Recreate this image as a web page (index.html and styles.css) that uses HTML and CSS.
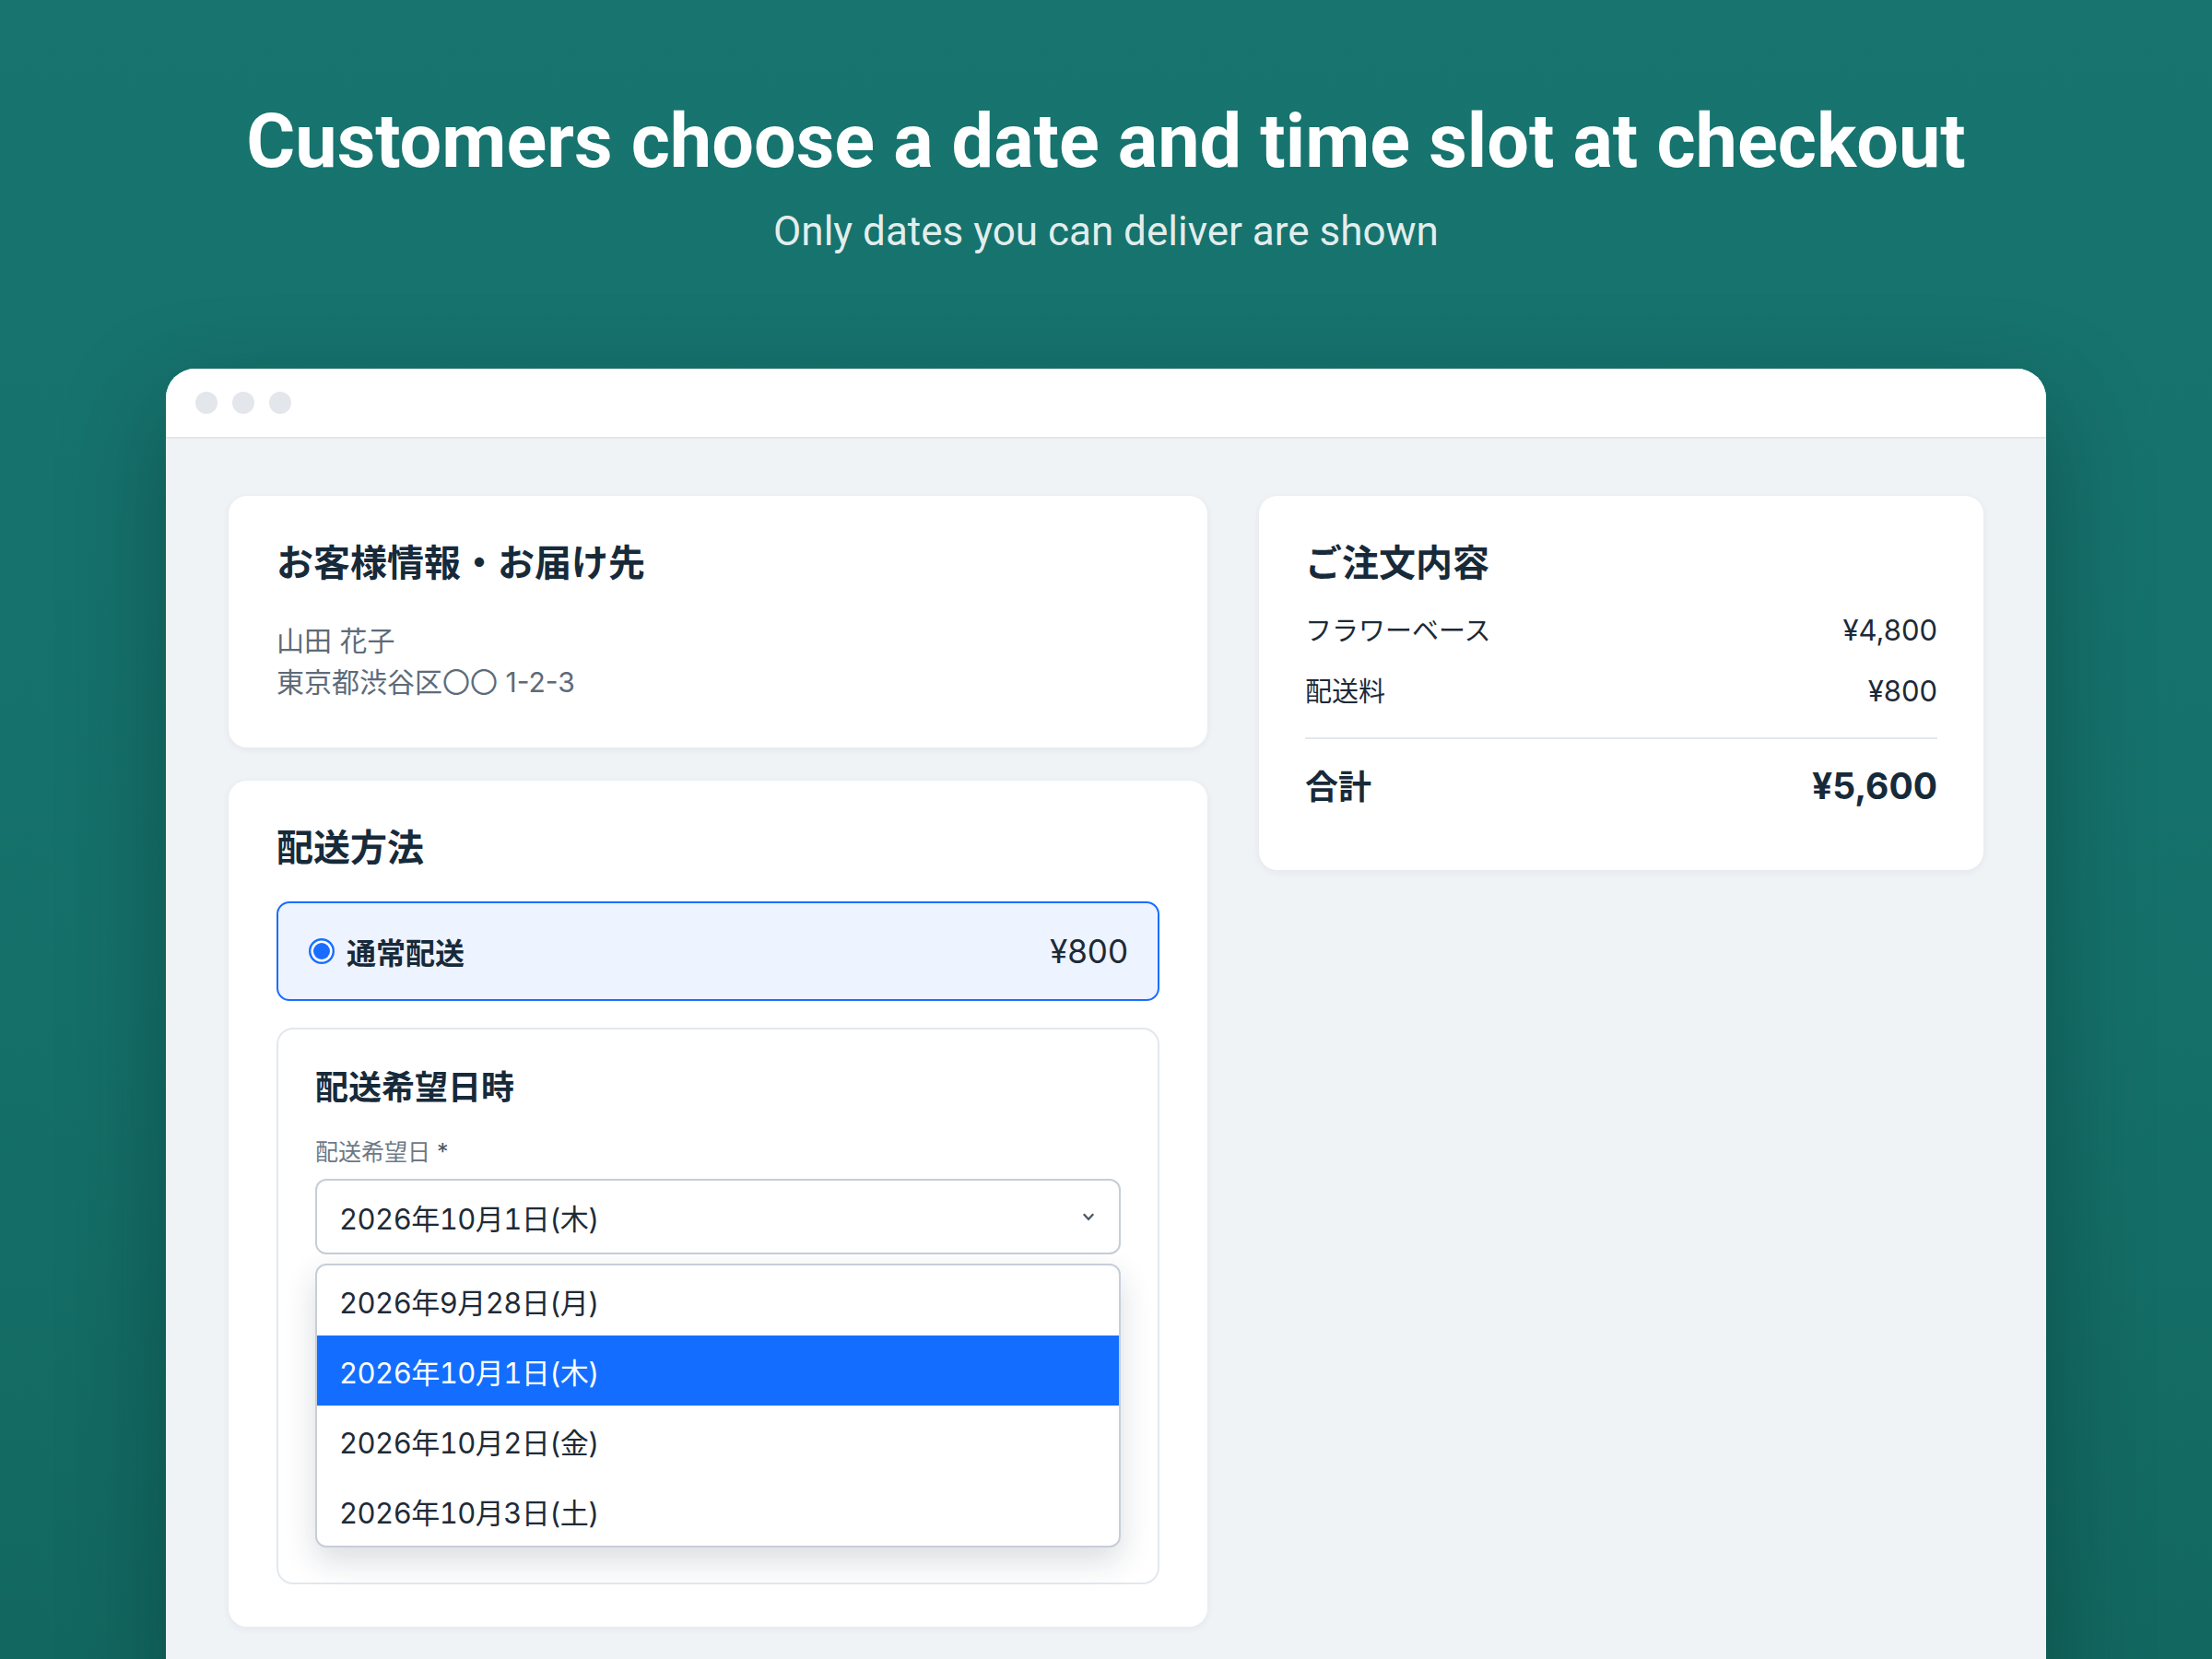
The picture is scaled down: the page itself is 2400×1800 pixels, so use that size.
FILE: index.html
```html
<!DOCTYPE html>
<html lang="ja">
<head>
<meta charset="utf-8">
<title>Checkout delivery date</title>
<link rel="stylesheet" href="styles.css">
</head>
<body>
<header class="hero">
  <h1 class="hero-title">Customers choose a date and time slot at checkout</h1>
  <p class="hero-sub">Only dates you can deliver are shown</p>
</header>
<div class="window">
  <div class="window-bar">
    <span class="dot"></span><span class="dot"></span><span class="dot"></span>
  </div>
  <div class="window-body">
    <div class="col-main">
      <section class="card card-customer">
        <h2 class="card-title">お客様情報・お届け先</h2>
        <p class="info-line">山田 花子</p>
        <p class="info-line">東京都渋谷区〇〇 1-2-3</p>
      </section>
      <section class="card card-shipping">
        <h2 class="card-title card-title-tight">配送方法</h2>
        <div class="method">
          <svg class="radio" width="28" height="28" viewBox="0 0 28 28" aria-hidden="true">
            <circle cx="14" cy="14" r="12.8" fill="#ffffff" stroke="#1a6dff" stroke-width="2.4"/>
            <circle cx="14" cy="14" r="9" fill="#1a6dff"/>
          </svg>
          <span class="method-name">通常配送</span>
          <span class="method-price">¥800</span>
        </div>
        <div class="panel">
          <h3 class="panel-title">配送希望日時</h3>
          <div class="field-label">配送希望日 <span class="req">*</span></div>
          <div class="select">
            <span>2026年10月1日(木)</span>
            <svg class="chevron" width="14" height="10" viewBox="0 0 14 10" aria-hidden="true">
              <polyline points="1.8,2.2 7,7.8 12.2,2.2" fill="none" stroke="#4a5868" stroke-width="2.3"/>
            </svg>
          </div>
          <ul class="options">
            <li class="option">2026年9月28日(月)</li>
            <li class="option option-selected">2026年10月1日(木)</li>
            <li class="option">2026年10月2日(金)</li>
            <li class="option">2026年10月3日(土)</li>
          </ul>
        </div>
      </section>
    </div>
    <aside class="card card-summary">
      <h2 class="card-title card-title-summary">ご注文内容</h2>
      <div class="sum-row"><span class="sum-label">フラワーベース</span><span>¥4,800</span></div>
      <div class="sum-row sum-row-next"><span class="sum-label">配送料</span><span>¥800</span></div>
      <div class="divider"></div>
      <div class="sum-total"><span class="total-label">合計</span><span class="total-value">¥5,600</span></div>
    </aside>
  </div>
</div>
</body>
</html>
```

FILE: styles.css
```css
html, body {
  height: 1800px;
  overflow: hidden;
}

body {
  margin: 0;
  background: linear-gradient(180deg, #17746f 0%, #15706a 60%, #126860 100%);
  font-family: "Inter", "Noto Sans CJK JP", sans-serif;
  color: #1d2a37;
}

.hero {
  padding-top: 106px;
  text-align: center;
}

.hero-title {
  margin: 0;
  font-family: "Roboto", "Inter", sans-serif;
  font-weight: 700;
  font-size: 81px;
  line-height: 96px;
  color: #ffffff;
}

.hero-sub {
  margin: 21px 0 0;
  font-family: "Roboto", "Inter", sans-serif;
  font-weight: 400;
  font-size: 44px;
  line-height: 57px;
  color: rgba(255, 255, 255, 0.9);
}

.window {
  width: 2040px;
  margin: 120px auto 0;
  border-radius: 32px 32px 0 0;
  overflow: hidden;
  background: #eff3f6;
  box-shadow: 0 40px 110px rgba(0, 30, 28, 0.35);
}

.window-bar {
  height: 74px;
  border-bottom: 2px solid #e2e7ec;
  background: #ffffff;
  display: flex;
  align-items: center;
  gap: 16px;
  padding-left: 32px;
}

.dot {
  width: 24px;
  height: 24px;
  border-radius: 50%;
  background: #e3e6eb;
}

.window-body {
  display: grid;
  grid-template-columns: 1062px 786px;
  column-gap: 56px;
  align-items: start;
  padding: 62px 68px 80px;
}

.col-main {
  display: flex;
  flex-direction: column;
  gap: 36px;
}

.card {
  background: #ffffff;
  border-radius: 20px;
  box-shadow: 0 2px 8px rgba(16, 40, 60, 0.06);
  padding: 47px 52px 48px;
}

.card-title {
  margin: 0 0 36px;
  font-weight: 700;
  font-size: 40px;
  line-height: 52px;
  color: #172a3a;
}

.card-title-tight {
  margin-bottom: 32px;
}

.info-line {
  margin: 0;
  font-size: 30px;
  line-height: 45px;
  color: #5d6b79;
}

.card-shipping {
  padding-bottom: 46px;
}

.method {
  height: 108px;
  box-sizing: border-box;
  border: 2px solid #1a6dff;
  border-radius: 14px;
  background: #edf3ff;
  display: flex;
  align-items: center;
  gap: 13px;
  padding: 0 32px 0 33px;
}

.radio {
  flex: none;
}

.method-name {
  flex: 1;
  font-weight: 700;
  font-size: 32px;
  color: #172a3a;
}

.method-price {
  font-size: 35px;
  color: #1d2a37;
}

.panel {
  margin-top: 29px;
  border: 2px solid #e3e8ee;
  border-radius: 18px;
  padding: 40px 40px 38px;
}

.panel-title {
  margin: 0 0 28px;
  font-weight: 700;
  font-size: 36px;
  line-height: 47px;
  color: #172a3a;
}

.field-label {
  font-size: 25px;
  line-height: 36px;
  color: #6d7986;
  margin-bottom: 11px;
}

.req {
  color: #4d5763;
}

.select {
  height: 82px;
  box-sizing: border-box;
  border: 2px solid #c6ced8;
  border-radius: 12px;
  display: flex;
  align-items: center;
  justify-content: space-between;
  padding: 0 26px 0 24px;
  font-size: 31px;
  letter-spacing: -0.55px;
  font-variant-numeric: tabular-nums;
  color: #1e2b38;
  background: #ffffff;
}

.options {
  margin: 10px 0 0;
  padding: 0;
  list-style: none;
  border: 2px solid #c6ced8;
  border-radius: 12px;
  overflow: hidden;
  background: #ffffff;
  box-shadow: 0 14px 34px rgba(20, 40, 60, 0.16);
}

.option {
  height: 76px;
  display: flex;
  align-items: center;
  padding-left: 24px;
  font-size: 31px;
  letter-spacing: -0.55px;
  font-variant-numeric: tabular-nums;
  color: #1e2b38;
}

.option-selected {
  background: #136eff;
  color: #ffffff;
}

.card-summary {
  padding: 47px 50px 65px;
}

.card-title-summary {
  margin-bottom: 24px;
}

.sum-row {
  display: flex;
  justify-content: space-between;
  align-items: baseline;
  font-size: 31px;
  line-height: 45px;
  color: #1d2a37;
}

.sum-label {
  font-size: 29px;
}

.sum-row-next {
  margin-top: 20px;
}

.divider {
  height: 2px;
  background: #e3e8ec;
  margin: 27px 0 26px;
}

.sum-total {
  display: flex;
  justify-content: space-between;
  align-items: baseline;
  font-weight: 700;
  line-height: 50px;
  color: #172a3a;
}

.total-label {
  font-size: 36px;
}

.total-value {
  font-size: 39px;
}
```
